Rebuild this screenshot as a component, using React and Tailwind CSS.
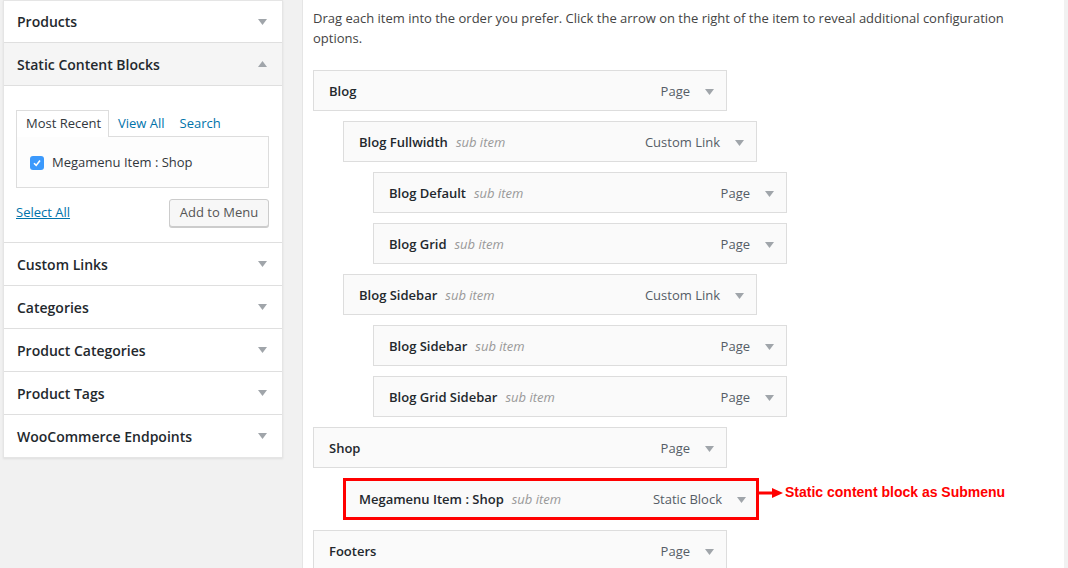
import React from "react";

const Down = ({ className = "" }) => (
  <svg width="9" height="6" viewBox="0 0 9 6" className={className}>
    <path d="M0 0 L9 0 L4.5 6 Z" fill="#a0a5aa" />
  </svg>
);
const Up = () => (
  <svg width="9" height="6" viewBox="0 0 9 6">
    <path d="M0 6 L9 6 L4.5 0 Z" fill="#a0a5aa" />
  </svg>
);

function SideRow({ label, open, first }) {
  return (
    <div
      className={`${first ? "h-[42px]" : "h-[43px]"} flex items-center justify-between pl-[13px] pr-[15px] border-b border-[#dfdfdf] ${
        open ? "bg-[#f5f5f5]" : "bg-white"
      }`}
    >
      <span className="text-[14px] font-semibold text-[#23282d]">{label}</span>
      {open ? <Up /> : <Down />}
    </div>
  );
}

const items = [
  { title: "Blog", depth: 0, type: "Page" },
  { title: "Blog Fullwidth", depth: 1, type: "Custom Link" },
  { title: "Blog Default", depth: 2, type: "Page" },
  { title: "Blog Grid", depth: 2, type: "Page" },
  { title: "Blog Sidebar", depth: 1, type: "Custom Link" },
  { title: "Blog Sidebar", depth: 2, type: "Page" },
  { title: "Blog Grid Sidebar", depth: 2, type: "Page" },
  { title: "Shop", depth: 0, type: "Page" },
  { title: "Megamenu Item : Shop", depth: 1, type: "Static Block", hl: true },
  { title: "Footers", depth: 0, type: "Page" },
];

const indent = ["ml-0", "ml-[30px]", "ml-[60px]"];

function MenuItem({ it }) {
  const box = it.hl
    ? "w-[416px] h-[42px] border-[3px] border-[#ff0000] pl-[13px] pr-[10px] pt-[2px]"
    : "w-[414px] h-[41px] border border-[#dddddd] pl-[15px] pr-[12px] pt-[2px]";
  return (
    <div className={`flex items-center ${indent[it.depth]}`}>
      <div className={`${box} bg-[#fafafa] flex items-center justify-between shrink-0`}>
        <div className="flex items-baseline gap-[8px] text-[13px]">
          <span className="font-semibold text-[#23282d]">{it.title}</span>
          {it.depth > 0 && <span className="italic text-[#999999]">sub item</span>}
        </div>
        <div className="flex items-center gap-[15px]">
          <span className="text-[13px] text-[#555d66]">{it.type}</span>
          <Down />
        </div>
      </div>
      {it.hl && (
        <div className="flex items-center -mt-[13px]">
          <svg width="24" height="10" viewBox="0 0 24 10" className="shrink-0">
            <rect x="0" y="3.5" width="15" height="3" fill="#ff0000" />
            <path d="M13 0 L24 5 L13 10 Z" fill="#ff0000" />
          </svg>
          <span className="ml-[2px] text-[14px] font-bold text-[#ff0000] font-['Liberation_Sans',Arial,sans-serif] whitespace-nowrap">
            Static content block as Submenu
          </span>
        </div>
      )}
    </div>
  );
}

export default function App() {
  return (
    <div className="w-[1068px] h-[568px] bg-[#f1f1f1] flex overflow-hidden font-['Open_Sans',sans-serif] text-[#444]">
      <div className="pl-[3px] w-[283px] shrink-0">
        <div className="bg-white border border-[#e5e5e5] shadow-[0_1px_2px_rgba(0,0,0,0.08)]">
          <SideRow label="Products" first />
          <SideRow label="Static Content Blocks" open />
          <div className="h-[157px] border-b border-[#dfdfdf] px-[12px] pt-[24px]">
            <div className="flex items-start text-[13px] h-[26px]">
              <div className="h-[27px] w-[93px] border border-b-0 border-[#dddddd] bg-white flex items-center pl-[9px] text-[#32373c] relative z-10">
                Most Recent
              </div>
              <div className="h-[27px] flex items-center pl-[9px] text-[#0073aa]">View All</div>
              <div className="h-[27px] flex items-center pl-[15px] text-[#0073aa]">Search</div>
            </div>
            <div className="w-[253px] h-[52px] border border-[#dddddd] bg-[#fdfdfd] flex items-center pl-[13px] pt-[2px]">
              <div className="w-[14px] h-[14px] rounded-[3px] bg-[#3b99fc] flex items-center justify-center">
                <svg width="10" height="10" viewBox="0 0 10 10">
                  <path d="M2 5.2 L4.2 7.4 L8 2.6" stroke="white" strokeWidth="1.6" fill="none" />
                </svg>
              </div>
              <span className="ml-[8px] text-[13px] text-[#32373c]">Megamenu Item : Shop</span>
            </div>
            <div className="flex items-center justify-between w-[253px] mt-[11px]">
              <span className="text-[13px] text-[#0073aa] underline">Select All</span>
              <div className="h-[28px] w-[100px] border border-[#cccccc] rounded-[3px] bg-[#f7f7f7] shadow-[0_1px_0_#cccccc] flex items-center justify-center text-[13px] text-[#555]">
                Add to Menu
              </div>
            </div>
          </div>
          <SideRow label="Custom Links" />
          <SideRow label="Categories" />
          <SideRow label="Product Categories" />
          <SideRow label="Product Tags" />
          <div className="h-[42px] flex items-center justify-between pl-[13px] pr-[15px]">
            <span className="text-[14px] font-semibold text-[#23282d]">WooCommerce Endpoints</span>
            <Down />
          </div>
        </div>
      </div>
      <div className="ml-[19px] w-[762px] shrink-0 bg-white border-l border-[#e5e5e5] pl-[10px] pt-[8px]">
        <p className="text-[13px] leading-[20px] text-[#444] w-[720px]">
          Drag each item into the order you prefer. Click the arrow on the right of the item to reveal additional configuration options.
        </p>
        <div className="mt-[22px] flex flex-col gap-[10px]">
          {items.map((it, i) => (
            <MenuItem key={i} it={it} />
          ))}
        </div>
      </div>
    </div>
  );
}
